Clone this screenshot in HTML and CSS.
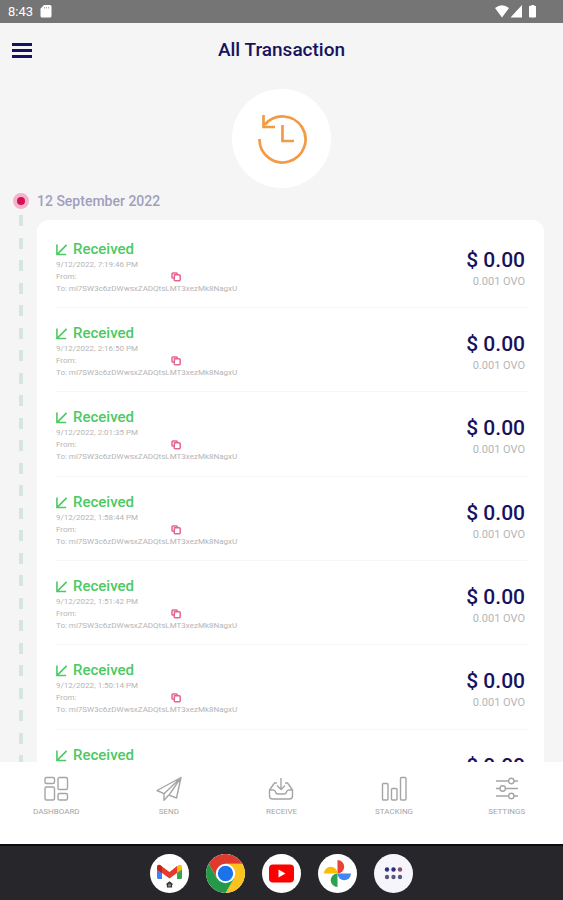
FILE: index.html
```html
<!DOCTYPE html>
<html lang="en">
<head>
<meta charset="utf-8">
<meta name="viewport" content="width=device-width, initial-scale=1">
<title>All Transaction</title>
<link rel="stylesheet" href="styles.css">
</head>
<body>
<svg class="sprite" aria-hidden="true">
  <symbol id="incoming" viewBox="0 0 13 13"><path d="M1 1v11h10M1.5 11.500L11.500 1.500" fill="none" stroke="currentColor" stroke-width="1.700"/></symbol>
  <symbol id="copy" viewBox="0 0 10 10"><path d="M3.500 2.800h4.700q1 0 1 1v4q0 1-1 1H4.200q-1 0-1-1zM3 6H1.800q-.8 0-.8-.8V2q0-.9.9-.9h3.600q.8 0 .8.800v.7" fill="none" stroke="currentColor" stroke-width="1.500"/></symbol>
</svg>

<div class="status">
  <time class="clock">8:43</time>
  <svg class="card-icon" viewBox="0 0 12 13"><path d="M4 0h6q1.500 0 1.500 1.500v9.500q0 1.500-1.500 1.500H2Q.5 12.500.5 11V3.700z" fill="#fff"/><path d="M4.500 2v1.500M6.500 2v1.500M8.500 2v1.500" stroke="#aaa"/></svg>
  <svg class="signals" viewBox="0 0 43 13"><path d="M0 3Q7-2.500 14 3L7 12.500zM27 0v12.500H15.500zM35 .8h1.500V0h2.500v.8h1q1 0 1 1v9.700q0 1-1 1h-5q-1 0-1-1V1.800q0-1 1-1z" fill="#fff"/></svg>
</div>

<header class="header">
  <button class="menu" aria-label="Menu"><svg viewBox="0 0 20 15"><path d="M0 1.500h20M0 7.500h20M0 13.500h20" stroke="currentColor" stroke-width="2.800"/></svg></button>
  <h1>All Transaction</h1>
</header>

<main class="content">
  <div class="hero">
    <svg viewBox="0 0 52 52"><path d="M3.500 26A23 23 0 1 0 9 11.500M7.500 2v12H19M26.500 12v16H38" fill="none" stroke="#f39a45" stroke-width="2.700"/></svg>
  </div>
  <div class="day"><span class="dot"></span><h2>12 September 2022</h2></div>
  <div class="timeline">
    <div class="rail"></div>
    <ul class="list">
      <li class="row">
        <div class="details">
          <h3><svg><use href="#incoming"/></svg>Received</h3>
          <p>9/12/2022, 7:19:46 PM</p>
          <p class="from">From: <button aria-label="Copy address"><svg><use href="#copy"/></svg></button></p>
          <p>To: mi7SW3c6zDWwsxZADQtsLMT3xezMk8NagxU</p>
        </div>
        <div class="amount"><strong>$ 0.00</strong><span>0.001 OVO</span></div>
      </li>
      <li class="row">
        <div class="details">
          <h3><svg><use href="#incoming"/></svg>Received</h3>
          <p>9/12/2022, 2:16:50 PM</p>
          <p class="from">From: <button aria-label="Copy address"><svg><use href="#copy"/></svg></button></p>
          <p>To: mi7SW3c6zDWwsxZADQtsLMT3xezMk8NagxU</p>
        </div>
        <div class="amount"><strong>$ 0.00</strong><span>0.001 OVO</span></div>
      </li>
      <li class="row">
        <div class="details">
          <h3><svg><use href="#incoming"/></svg>Received</h3>
          <p>9/12/2022, 2:01:35 PM</p>
          <p class="from">From: <button aria-label="Copy address"><svg><use href="#copy"/></svg></button></p>
          <p>To: mi7SW3c6zDWwsxZADQtsLMT3xezMk8NagxU</p>
        </div>
        <div class="amount"><strong>$ 0.00</strong><span>0.001 OVO</span></div>
      </li>
      <li class="row">
        <div class="details">
          <h3><svg><use href="#incoming"/></svg>Received</h3>
          <p>9/12/2022, 1:58:44 PM</p>
          <p class="from">From: <button aria-label="Copy address"><svg><use href="#copy"/></svg></button></p>
          <p>To: mi7SW3c6zDWwsxZADQtsLMT3xezMk8NagxU</p>
        </div>
        <div class="amount"><strong>$ 0.00</strong><span>0.001 OVO</span></div>
      </li>
      <li class="row">
        <div class="details">
          <h3><svg><use href="#incoming"/></svg>Received</h3>
          <p>9/12/2022, 1:51:42 PM</p>
          <p class="from">From: <button aria-label="Copy address"><svg><use href="#copy"/></svg></button></p>
          <p>To: mi7SW3c6zDWwsxZADQtsLMT3xezMk8NagxU</p>
        </div>
        <div class="amount"><strong>$ 0.00</strong><span>0.001 OVO</span></div>
      </li>
      <li class="row">
        <div class="details">
          <h3><svg><use href="#incoming"/></svg>Received</h3>
          <p>9/12/2022, 1:50:14 PM</p>
          <p class="from">From: <button aria-label="Copy address"><svg><use href="#copy"/></svg></button></p>
          <p>To: mi7SW3c6zDWwsxZADQtsLMT3xezMk8NagxU</p>
        </div>
        <div class="amount"><strong>$ 0.00</strong><span>0.001 OVO</span></div>
      </li>
      <li class="row">
        <div class="details">
          <h3><svg><use href="#incoming"/></svg>Received</h3>
        </div>
        <div class="amount"><strong>$ 0.00</strong></div>
      </li>
    </ul>
  </div>
</main>

<nav class="tabs">
  <a href="#dashboard"><svg viewBox="0 0 26 26"><rect x="2" y="1.500" width="9.500" height="6" rx="1.500"/><rect x="15" y="1.500" width="9.500" height="12" rx="1.500"/><rect x="2" y="11" width="9.500" height="13" rx="1.500"/><rect x="15" y="17.500" width="9.500" height="6.500" rx="1.500"/></svg>DASHBOARD</a>
  <a href="#send"><svg viewBox="0 0 26 26"><path d="M25 1.500L1 14.500l7 3.200zM25 1.500L20.500 22l-7.500-2.800zM25 1.500L8 17.700v6.500l4.500-5"/></svg>SEND</a>
  <a href="#receive"><svg viewBox="0 0 26 26"><path d="M9 7H6.500L1.500 14v6q0 3 3 3h17q3 0 3-3v-6l-5-7H17M1.500 14H5q2 0 2.500 2t2.500 2h6q2 0 2.500-2t2.500-2h3.500M13 2v11M9 9.500l4 4 4-4"/></svg>RECEIVE</a>
  <a href="#stacking"><svg viewBox="0 0 26 26"><rect x="1.500" y="7.500" width="5.500" height="16.500" rx="1"/><rect x="10.500" y="12.500" width="5.500" height="11.500" rx="1"/><rect x="19.500" y="1.500" width="5.500" height="22.500" rx="1"/></svg>STACKING</a>
  <a href="#settings"><svg viewBox="0 0 26 26"><path d="M2 5h12.500M20 5h4M2 12.500h4M11.500 12.500h12.500M2 20h12.500M20 20h4"/><circle cx="17.300" cy="5" r="2.700"/><circle cx="8.700" cy="12.500" r="2.700"/><circle cx="17.300" cy="20" r="2.700"/></svg>SETTINGS</a>
</nav>

<footer class="dock">
  <button aria-label="Gmail"><svg viewBox="0 0 39 39"><path d="M7 14.500l5 3.500v7H8.500Q7 25 7 23.500z" fill="#3f82ee"/><path d="M32 14.500L27 18v7h3.500q1.500 0 1.500-1.500z" fill="#36a552"/><path d="M27 12l2-1q3-1 3 2.500v2L27 19z" fill="#fbbc04"/><path d="M7 15.500v-2q0-3.500 3-2.500l9.500 7 7.500-6v7l-7.500 5.500L12 19z" fill="#e53b2e"/><path d="M7 15.500v-2q0-3.500 3-2.500l2 1.500V19z" fill="#c5221f"/><path d="M16.500 30.500l3-2.500 3 2.500M17.500 30v3h4v-3z" fill="#888" stroke="#333" stroke-width="1.200"/></svg></button>
  <button aria-label="Chrome"><svg viewBox="0 0 39 39"><path d="M19.500 19.500V9.700h16.900A19.500 19.500 0 0 1 19.500 39L28 24.400z" fill="#fcc31e"/><path d="M2.600 9.700A19.500 19.500 0 0 1 36.400 9.700H19.500L11 24.400z" fill="#df3a2e"/><path d="M2.600 9.700L11 24.400l8.500-4.900 8.500 4.900L19.500 39A19.500 19.500 0 0 1 2.600 9.700z" fill="#249a48"/><circle cx="19.500" cy="19.500" r="9.700" fill="#fff"/><circle cx="19.500" cy="19.500" r="7.700" fill="#1a73e8"/></svg></button>
  <button aria-label="YouTube"><svg viewBox="0 0 39 39"><rect x="7" y="10.500" width="25" height="18" rx="4" fill="#f00"/><path d="M16.500 15.500v8l7-4z" fill="#fff"/></svg></button>
  <button aria-label="Photos"><svg viewBox="0 0 39 39"><path d="M19.500 6a6.700 6.700 0 0 1 0 13.500z" fill="#ea4335"/><path d="M33 19.500a6.700 6.700 0 0 1-13.500 0z" fill="#4285f4"/><path d="M19.500 33a6.700 6.700 0 0 1 0-13.500z" fill="#2ba24c"/><path d="M6 19.500a6.700 6.700 0 0 1 13.500 0z" fill="#fbbc04"/></svg></button>
  <button class="apps" aria-label="All apps"><svg viewBox="0 0 39 39"><g fill="#28307f"><circle cx="13" cy="15.500" r="2.200"/><circle cx="19.500" cy="15.500" r="2.200"/></g><circle cx="26" cy="15.500" r="2.200" fill="#88506f"/><g fill="#5b5777"><circle cx="13" cy="23" r="2.200"/><circle cx="19.500" cy="23" r="2.200"/><circle cx="26" cy="23" r="2.200"/></g></svg></button>
</footer>
</body>
</html>
```
FILE: styles.css
```css
* { box-sizing: border-box; }
body {
  margin: 0;
  height: 100vh;
  display: flex;
  flex-direction: column;
  background: #f5f5f5;
  color: #17125f;
  font-family: Roboto, "Liberation Sans", sans-serif;
}
h1, h2, h3, p, ul { margin: 0; padding: 0; }
svg { display: block; }
button { border: 0; padding: 0; background: none; color: inherit; font: inherit; }
.sprite { position: absolute; width: 0; height: 0; }

.status {
  display: flex;
  flex: none;
  align-items: center;
  gap: 7px;
  height: 23px;
  padding: 0 25px 0 8px;
  background: #757575;
  color: #fff;
}
.clock { font-size: 13px; line-height: 23px; }
.card-icon { width: 12px; height: 13px; }
.signals { width: 43px; height: 13px; margin-left: auto; }

.header {
  display: grid;
  grid-template-columns: 20px 1fr 20px;
  flex: none;
  align-items: center;
  height: 54px;
  padding: 0 12px;
}
.menu svg { width: 20px; height: 15px; }
.header h1 { font-size: 19px; font-weight: 500; line-height: 24px; text-align: center; }

.content {
  display: flex;
  flex: 1;
  flex-direction: column;
  min-height: 0;
  overflow: hidden;
  padding-top: 12px;
}
.hero {
  display: grid;
  flex: none;
  place-items: center;
  align-self: center;
  width: 99px;
  height: 99px;
  border-radius: 50%;
  background: #fff;
}
.hero svg { width: 52px; height: 52px; }

.day {
  display: flex;
  flex: none;
  align-items: center;
  gap: 8px;
  height: 24px;
  margin-top: 1px;
  padding-left: 13px;
}
.dot {
  width: 16px;
  height: 16px;
  border: 4px solid #f3b3cb;
  border-radius: 50%;
  background: #d50f55;
}
.day h2 { color: #a09fbd; font-size: 14px; font-weight: 500; line-height: 24px; }

.timeline { display: flex; flex: 1; min-height: 0; padding: 0 19px; }
.rail {
  flex: none;
  width: 4px;
  margin: 2px 14px 0 0;
  background: repeating-linear-gradient(#d6e4e4 0 11px, transparent 11px 23px, #d6e4e4 23px 34px, transparent 34px 45px);
}
.list {
  flex: 1;
  margin-top: 7px;
  padding: 4px 17px 0 19px;
  border-radius: 12px 12px 0 0;
  background: #fff;
  list-style: none;
}
.row {
  display: flex;
  justify-content: space-between;
  height: 84px;
  padding: 15px 2px 0 0;
  border-bottom: 1px solid #f7f7f7;
}
.row:nth-child(3n) { height: 85px; }
.details h3 {
  display: flex;
  align-items: center;
  gap: 5px;
  color: #4cc963;
  font-size: 15px;
  font-weight: 500;
  line-height: 20px;
}
.details h3 svg { width: 12px; height: 13px; }
.details p { color: #b5b5b5; font-size: 8px; line-height: 12px; }
.details .from { display: flex; align-items: center; justify-content: space-between; width: 125px; }
.from button { color: #e6658f; }
.from svg { width: 10px; height: 10px; }
.amount { display: flex; flex-direction: column; align-items: flex-end; padding-top: 7px; }
.amount strong { font-size: 21px; font-weight: 500; line-height: 28px; }
.amount span { color: #b5b5b5; font-size: 11px; line-height: 16px; }

.tabs {
  display: grid;
  flex: none;
  grid-template-columns: repeat(5, 1fr);
  height: 82px;
  padding-top: 14px;
  background: #fff;
}
.tabs a {
  display: flex;
  flex-direction: column;
  align-items: center;
  gap: 4px;
  color: #a5a5a5;
  font-size: 8px;
  line-height: 12px;
  text-decoration: none;
}
.tabs svg { width: 26px; height: 26px; fill: none; stroke: #a5a5a5; stroke-width: 1.4; stroke-linejoin: round; }

.dock {
  display: flex;
  flex: none;
  align-items: center;
  justify-content: center;
  gap: 17px;
  height: 56px;
  border-top: 2px solid #0c0c0e;
  background: #27262b;
}
.dock button {
  width: 39px;
  height: 39px;
  overflow: hidden;
  border-radius: 50%;
  background: #fff;
}
.dock .apps { background: #f7f5fc; }
```
